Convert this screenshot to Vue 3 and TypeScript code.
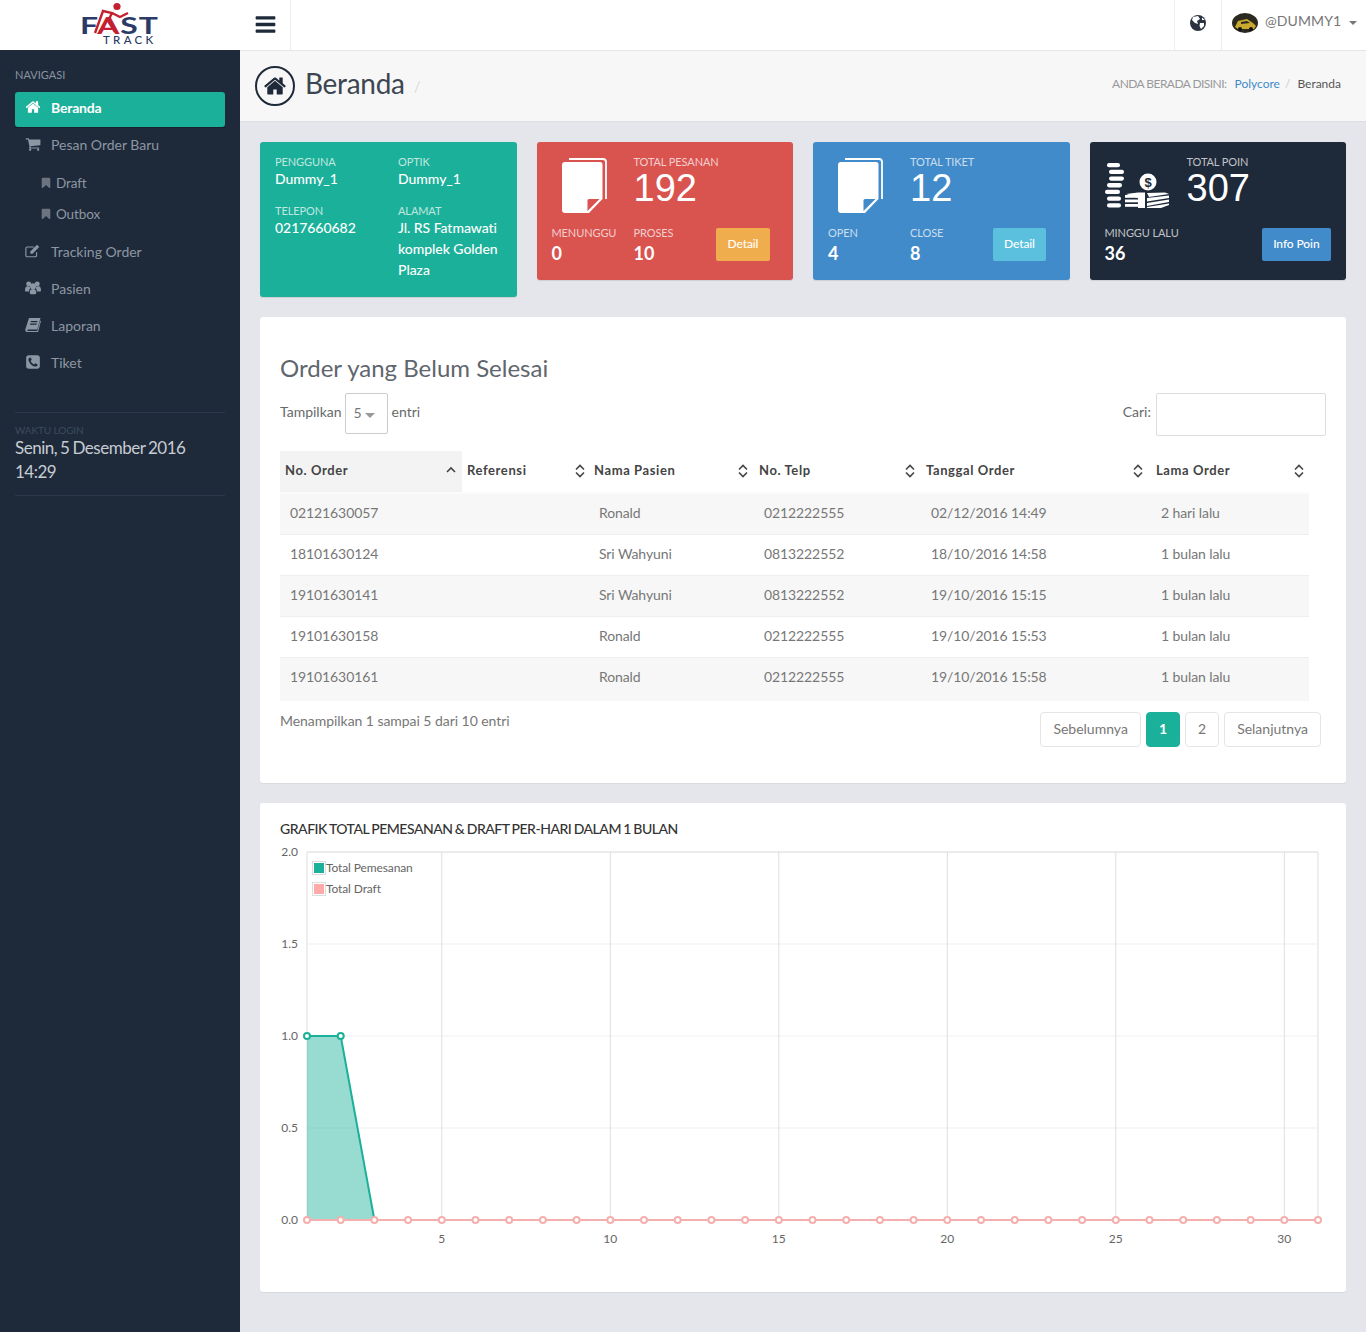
<template>
  <div class="app">
    <header class="topbar">
      <div class="brand">
        <div class="logo">
          <span class="logo-fast">F<b>A</b>ST</span>
          <span class="logo-track">TRACK</span>
          <svg class="logo-runner" viewBox="0 0 80 46" aria-hidden="true">
            <circle cx="37" cy="6.500" r="3.600" fill="#c4202f" />
            <path d="M15 33 L23 11 L32 13 L28 21 L35 32 M32 13 L40 17 L48 13" fill="none" stroke="#c4202f" stroke-width="2.400" />
          </svg>
        </div>
      </div>
      <button class="toggle">
        <svg viewBox="0 0 1792 1792" class="toggle-icon"><path :d="icons.bars" /></svg>
      </button>
      <div class="top-right">
        <div class="globe-cell">
          <svg viewBox="0 0 20 20" class="globe">
            <circle cx="10" cy="10" r="8" fill="#2b3340" />
            <path d="M5 4 L10 3 L12 6 L9 8 L10 11 L7 10 L4 7 Z M12 10 L16 10 L16 13 L13 16 L11.500 13 Z M14 4.500 L17 7 L14 7 Z" fill="#fff" />
          </svg>
        </div>
        <div class="user">
          <svg viewBox="0 0 26 20" class="avatar">
            <ellipse cx="13" cy="10" rx="13" ry="10" fill="#2c2a20" />
            <path d="M3 14 L6 8 L15 6 L21 10 L24 13 L22 16 L6 16 Z" fill="#c9a92e" />
            <path d="M9 9 L15 8 L18 10 L9 11 Z" fill="#2c2a20" />
            <circle cx="8" cy="16" r="2" fill="#111" />
            <circle cx="19" cy="16" r="2" fill="#111" />
          </svg>
          <span class="user-name">@DUMMY1</span>
          <i class="caret"></i>
        </div>
      </div>
    </header>

    <div class="body">
      <aside class="sidebar">
        <div class="nav-title">NAVIGASI</div>
        <nav class="nav">
          <template v-for="item in navItems" :key="item.label">
            <a class="nav-item" :class="{ active: item.active, sub: item.sub }">
              <svg class="nav-icon" :viewBox="item.box || '0 0 1792 1792'" v-html="item.icon"></svg>
              <span>{{ item.label }}</span>
            </a>
          </template>
        </nav>
        <div class="login-box">
          <div class="login-label">WAKTU LOGIN</div>
          <div class="login-time">Senin, 5 Desember 2016<br />14:29</div>
        </div>
      </aside>

      <main class="main">
        <div class="page-head">
          <div class="head-left">
            <span class="head-icon">
              <svg viewBox="0 0 1792 1792"><path :d="icons.home" /></svg>
            </span>
            <h1>Beranda</h1>
            <span class="head-slash">/</span>
          </div>
          <div class="crumbs">
            <span class="crumb-label">ANDA BERADA DISINI:</span>
            <a>Polycore</a>
            <span class="crumb-sep">/</span>
            <span class="crumb-now">Beranda</span>
          </div>
        </div>

        <div class="content">
          <section class="stats">
            <div class="stat stat-user">
              <div v-for="f in userFields" :key="f.label" class="user-field">
                <div class="stat-label">{{ f.label }}</div>
                <div class="user-value">{{ f.value }}</div>
              </div>
            </div>

            <div v-for="card in docCards" :key="card.title" class="stat" :class="card.cls">
              <div class="stat-top">
                <svg class="doc-icon" viewBox="0 0 45 56">
                  <path d="M7 2 H41 a3 3 0 0 1 3 3 V42" fill="none" stroke="#fff" stroke-width="1.800" />
                  <path d="M3 5 H38 a2.500 2.500 0 0 1 2.500 2.500 V42 L27 56 H3 a3 3 0 0 1 -3 -3 V8 a3 3 0 0 1 3 -3 Z" fill="#fff" />
                  <path d="M25.500 54 V43.500 a1.500 1.500 0 0 1 1.500 -1.500 H37.500 Z" :fill="card.fold" />
                </svg>
                <div>
                  <div class="stat-label">{{ card.title }}</div>
                  <div class="stat-big">{{ card.total }}</div>
                </div>
              </div>
              <div class="stat-bottom">
                <div v-for="s in card.subs" :key="s.label">
                  <div class="stat-label">{{ s.label }}</div>
                  <div class="stat-num">{{ s.value }}</div>
                </div>
                <button class="stat-btn" :class="card.btn">Detail</button>
              </div>
            </div>

            <div class="stat stat-poin">
              <div class="stat-top">
                <svg class="money-icon" viewBox="0 0 64 50">
                  <g fill="#fff">
                    <rect x="2" y="1" width="13" height="4.300" rx="2.100" />
                    <rect x="4" y="7.700" width="15" height="4.300" rx="2.100" />
                    <rect x="4" y="14.400" width="15" height="4.300" rx="2.100" />
                    <rect x="2" y="21.100" width="15" height="4.300" rx="2.100" />
                    <rect x="0" y="27.800" width="15" height="4.300" rx="2.100" />
                    <rect x="2" y="34.500" width="14" height="4.300" rx="2.100" />
                    <rect x="2" y="41.200" width="14" height="4.300" rx="2.100" />
                    <circle cx="43" cy="20" r="8.500" />
                    <rect x="20" y="33" width="13" height="2.800" />
                    <rect x="20" y="37.500" width="13" height="2.800" />
                    <rect x="20" y="42" width="13" height="2.800" />
                    <path d="M21 32 L33 30.500 H38 L40 30.500 V46 H33 V36 Z" />
                    <path d="M42 31 L60 30.500 L64 32 L44 35 Z M42 36 L64 33.500 V36 L42 39.500 Z M42 41 L64 37.500 V40 L42 44 Z M42 45 L64 41.500 V43 L56 46 H42 Z" />
                  </g>
                  <text x="43" y="24.500" text-anchor="middle" class="money-sign">$</text>
                </svg>
                <div>
                  <div class="stat-label">TOTAL POIN</div>
                  <div class="stat-big">307</div>
                </div>
              </div>
              <div class="stat-bottom poin-bottom">
                <div>
                  <div class="stat-label">MINGGU LALU</div>
                  <div class="stat-num">36</div>
                </div>
                <button class="stat-btn btn-blue">Info Poin</button>
              </div>
            </div>
          </section>

          <section class="panel order-panel">
            <h2>Order yang Belum Selesai</h2>
            <div class="table-tools">
              <div class="len">
                <span>Tampilkan</span>
                <span class="select-box">5 <i class="select-caret"></i></span>
                <span class="len-after">entri</span>
              </div>
              <label class="search">Cari: <input type="text" /></label>
            </div>
            <table class="orders">
              <colgroup>
                <col v-for="c in columns" :key="c.label" :style="{ width: c.width + 'px' }" />
              </colgroup>
              <thead>
                <tr>
                  <th v-for="(c, i) in columns" :key="c.label" :class="{ sorted: i === 0 }">
                    <div class="th-in">
                      <span>{{ c.label }}</span>
                      <svg viewBox="0 0 12 16" class="sort" :style="{ marginRight: c.sortPad + 'px' }">
                        <path v-if="i === 0" d="M2 9 L6 5 L10 9" />
                        <template v-else>
                          <path d="M2 6.500 L6 2.500 L10 6.500" />
                          <path d="M2 9.500 L6 13.500 L10 9.500" />
                        </template>
                      </svg>
                    </div>
                  </th>
                </tr>
              </thead>
              <tbody>
                <tr v-for="o in orders" :key="o.no">
                  <td>{{ o.no }}</td>
                  <td></td>
                  <td>{{ o.name }}</td>
                  <td>{{ o.phone }}</td>
                  <td>{{ o.date }}</td>
                  <td>{{ o.age }}</td>
                </tr>
              </tbody>
            </table>
            <div class="table-foot">
              <div class="info">Menampilkan 1 sampai 5 dari 10 entri</div>
              <div class="pager">
                <a>Sebelumnya</a>
                <a class="current">1</a>
                <a>2</a>
                <a>Selanjutnya</a>
              </div>
            </div>
          </section>

          <section class="panel chart-panel">
            <h3>GRAFIK TOTAL PEMESANAN &amp; DRAFT PER-HARI DALAM 1 BULAN</h3>
            <svg class="chart" viewBox="0 0 1046 420" width="1046" height="420">
              <line v-for="(y, i) in yTicks" :key="'h' + i" :x1="plotL" :x2="plotR" :y1="y.y" :y2="y.y" class="grid-h" />
              <line v-for="x in xTicks" :key="'v' + x.label" :x1="x.x" :x2="x.x" :y1="plotT" :y2="plotB" class="grid-v" />
              <line :x1="plotL" :x2="plotL" :y1="plotT" :y2="plotB" class="grid-v" />
              <line :x1="plotR" :x2="plotR" :y1="plotT" :y2="plotB" class="grid-v" />
              <line :x1="plotL" :x2="plotR" :y1="plotT" :y2="plotT" class="grid-v" />
              <text v-for="y in yTicks" :key="y.label" :x="18" :y="y.y + 4" text-anchor="end" class="tick">{{ y.label }}</text>
              <text v-for="x in xTicks" :key="x.label" :x="x.x" :y="plotB + 23" text-anchor="middle" class="tick">{{ x.label }}</text>

              <polygon :points="areaPoints" fill="rgba(27,176,153,0.45)" />
              <polyline :points="linePoints(pemesanan)" fill="none" stroke="#1bb099" stroke-width="2" />
              <circle v-for="(v, i) in pemesanan.slice(0, 2)" :key="'t' + i" :cx="px(i)" :cy="py(v)" r="3" class="pt-teal" />
              <polyline :points="linePoints(draft)" fill="none" stroke="#f4b0ae" stroke-width="2" />
              <circle v-for="(v, i) in draft" :key="'d' + i" :cx="px(i)" :cy="py(v)" r="3" class="pt-pink" />

              <rect x="32.500" y="19.500" width="13" height="13" fill="#fff" stroke="#ddd" />
              <rect x="34" y="21" width="10" height="10" fill="#1bb099" />
              <text x="46" y="30" class="legend">Total Pemesanan</text>
              <rect x="32.500" y="40.500" width="13" height="13" fill="#fff" stroke="#ddd" />
              <rect x="34" y="42" width="10" height="10" fill="#ffa9a9" />
              <text x="46" y="51" class="legend">Total Draft</text>
            </svg>
          </section>
        </div>
      </main>
    </div>
  </div>
</template>

<script setup lang="ts">
const icons = {
  bars: 'M1664 1344v128q0 26-19 45t-45 19h-1408q-26 0-45-19t-19-45v-128q0-26 19-45t45-19h1408q26 0 45 19t19 45zm0-512v128q0 26-19 45t-45 19h-1408q-26 0-45-19t-19-45v-128q0-26 19-45t45-19h1408q26 0 45 19t19 45zm0-512v128q0 26-19 45t-45 19h-1408q-26 0-45-19t-19-45v-128q0-26 19-45t45-19h1408q26 0 45 19t19 45z',
  home: 'M1472 992v480q0 26-19 45t-45 19h-384v-384h-256v384h-384q-26 0-45-19t-19-45v-480q0-1 .5-3t.5-3l575-474 575 474q1 2 1 6zm223-69l-62 74q-8 9-21 11h-3q-13 0-21-7l-692-577-692 577q-12 8-24 7-13-2-21-11l-62-74q-8-10-7-23.500t11-21.500l719-599q32-26 76-26t76 26l244 204v-195q0-14 9-23t23-9h192q14 0 23 9t9 23v408l219 182q10 8 11 21.500t-7 23.500z',
  cart: 'M704 1536q0 52-38 90t-90 38-90-38-38-90 38-90 90-38 90 38 38 90zm896 0q0 52-38 90t-90 38-90-38-38-90 38-90 90-38 90 38 38 90zm128-1088v512q0 24-16.500 42.500t-40.500 21.500l-1044 122q13 60 13 70 0 16-24 64h920q26 0 45 19t19 45-19 45-45 19h-1024q-26 0-45-19t-19-45q0-11 8-31.500t16-36 21.500-40 15.500-29.500l-177-823h-204q-26 0-45-19t-19-45 19-45 45-19h256q16 0 28.500 6.500t19.500 15.500 13 24.500 8 26 5.500 29.500 4.500 26h1201q26 0 45 19t19 45z',
  bookmark: 'M1420 128q23 0 44 9 33 13 52.500 41t19.500 62v1289q0 34-19.500 62t-52.500 41q-19 8-44 8-48 0-83-32l-441-424-441 424q-36 33-83 33-23 0-44-9-33-13-52.500-41t-19.500-62v-1289q0-34 19.500-62t52.500-41q21-9 44-9h1048z',
  phone: 'M1408 1193q0-11-2-16t-18-16.500-40.500-25-47.500-26.500-45.500-25-28.500-15q-5-3-19-13t-25-15-21-5q-15 0-36.500 20.500t-39.500 45-38.500 45-33.500 20.500q-7 0-16.500-3.500t-15.500-6.500-17-9.500-14-8.500q-99-55-170-126.500t-127-170.500q-2-3-8.500-14t-9.500-17-6.500-15.500-3.500-16.500q0-13 20.500-33.500t45-38.500 45-39.500 20.500-36.500q0-10-5-21t-15-25-13-19q-3-6-15-28.500t-25-45.500-26.500-47.500-25-40.500-16.500-18-16-2q-48 0-101 22-46 21-80 94.500t-34 130.500q0 16 2.500 34t5 30.500 9 33 10 29.500 12.500 33 11 30q60 164 216.500 320.500t320.500 216.500q6 2 30 11t33 12.500 29.500 10 33 9 30.500 5 34 2.500q57 0 130.500-34t94.500-80q22-53 22-101zm256-777v960q0 119-84.500 203.500t-203.500 84.500h-960q-119 0-203.500-84.500t-84.500-203.500v-960q0-119 84.500-203.500t203.500-84.500h960q119 0 203.500 84.500t84.500 203.500z',
}

const p = (d: string) => `<path d="${d}" />`

const navItems = [
  { label: 'Beranda', active: true, icon: p(icons.home) },
  { label: 'Pesan Order Baru', icon: p(icons.cart) },
  { label: 'Draft', sub: true, icon: p(icons.bookmark) },
  { label: 'Outbox', sub: true, icon: p(icons.bookmark) },
  {
    label: 'Tracking Order',
    box: '0 0 18 16',
    icon: '<path d="M13 9.500V13a1.500 1.500 0 0 1-1.500 1.500H2.500A1.500 1.500 0 0 1 1 13V5a1.500 1.500 0 0 1 1.500-1.500H10" fill="none" stroke="currentColor" stroke-width="1.300"/><path d="M6 8.500L13.500 1l2.500 2.500L8.500 11H6z"/>',
  },
  {
    label: 'Pasien',
    box: '0 0 18 15',
    icon: '<circle cx="4.200" cy="3" r="2.800"/><circle cx="13.800" cy="3" r="2.800"/><circle cx="9" cy="5.500" r="3.400"/><path d="M0 10c0-3 1-4.500 3-4.500l2.300.5.700 2c-1 .6-1.500 2-1.500 3.500H1c-.6 0-1-.5-1-1.500zM18 10c0-3-1-4.500-3-4.500l-2.300.5-.7 2c1 .6 1.500 2 1.500 3.500H17c.6 0 1-.5 1-1.500zM5.300 12.500c0-2.500 1-4 3.700-4s3.700 1.500 3.700 4c0 1.200-.7 2-1.700 2H7c-1 0-1.700-.8-1.700-2z"/>',
  },
  {
    label: 'Laporan',
    box: '0 0 16 16',
    icon: '<path fill-rule="evenodd" d="M4 1h11.500l-3.200 11.500H3c-.9 0-1 1.500 0 1.500h9.300l3-10.500.7.500-3 11H2.200C.5 15 0 13.500.4 12zM6 4l-.3 1.200h6.500L12.500 4zM5.300 6.500L5 7.700h6.500l.3-1.200z"/>',
  },
  { label: 'Tiket', icon: p(icons.phone) },
]

const userFields = [
  { label: 'PENGGUNA', value: 'Dummy_1' },
  { label: 'OPTIK', value: 'Dummy_1' },
  { label: 'TELEPON', value: '0217660682' },
  { label: 'ALAMAT', value: 'Jl. RS Fatmawati komplek Golden Plaza' },
]

const docCards = [
  {
    title: 'TOTAL PESANAN',
    total: 192,
    cls: 'stat-red',
    btn: 'btn-orange',
    fold: '#d9534f',
    subs: [
      { label: 'MENUNGGU', value: 0 },
      { label: 'PROSES', value: 10 },
    ],
  },
  {
    title: 'TOTAL TIKET',
    total: 12,
    cls: 'stat-blue',
    btn: 'btn-cyan',
    fold: '#428bca',
    subs: [
      { label: 'OPEN', value: 4 },
      { label: 'CLOSE', value: 8 },
    ],
  },
]

const columns = [
  { label: 'No. Order', width: 182, sortPad: 1 },
  { label: 'Referensi', width: 127, sortPad: -1 },
  { label: 'Nama Pasien', width: 165, sortPad: 1 },
  { label: 'No. Telp', width: 167, sortPad: 1 },
  { label: 'Tanggal Order', width: 230, sortPad: 3 },
  { label: 'Lama Order', width: 158, sortPad: 0 },
]

const orders = [
  { no: '02121630057', name: 'Ronald', phone: '0212222555', date: '02/12/2016 14:49', age: '2 hari lalu' },
  { no: '18101630124', name: 'Sri Wahyuni', phone: '0813222552', date: '18/10/2016 14:58', age: '1 bulan lalu' },
  { no: '19101630141', name: 'Sri Wahyuni', phone: '0813222552', date: '19/10/2016 15:15', age: '1 bulan lalu' },
  { no: '19101630158', name: 'Ronald', phone: '0212222555', date: '19/10/2016 15:53', age: '1 bulan lalu' },
  { no: '19101630161', name: 'Ronald', phone: '0212222555', date: '19/10/2016 15:58', age: '1 bulan lalu' },
]

// chart geometry, in svg units (svg starts at x=280)
const plotL = 27
const plotR = 1038
const plotT = 10
const plotB = 378
const px = (i: number) => plotL + (i * (plotR - plotL)) / 30
const py = (v: number) => plotB - (v / 2) * (plotB - plotT)

const pemesanan = Array.from({ length: 31 }, (_, i) => (i < 2 ? 1 : 0))
const draft = Array.from({ length: 31 }, () => 0)

const linePoints = (data: number[]) => data.map((v, i) => `${px(i)},${py(v)}`).join(' ')
const areaPoints = `${px(0)},${py(0)} ${px(0)},${py(1)} ${px(1)},${py(1)} ${px(2)},${py(0)}`

const yTicks = [2, 1.5, 1, 0.5, 0].map(v => ({ label: v.toFixed(1), y: py(v) }))
const xTicks = [5, 10, 15, 20, 25, 30].map(d => ({ label: d, x: px(d - 1) }))
</script>

<style>
html,
body {
  margin: 0;
  background: #e4e6eb;
}
</style>

<style scoped>
* {
  box-sizing: border-box;
}

.app {
  width: 1366px;
  min-height: 1332px;
  font-family: Lato, 'Liberation Sans', sans-serif;
  font-size: 14px;
  color: #676a6c;
  background: #e4e6eb;
}

.topbar {
  display: flex;
  height: 51px;
  background: #fff;
  border-bottom: 1px solid #e4e6eb;
}

.brand {
  width: 240px;
  padding-left: 80px;
}

.logo {
  position: relative;
  width: 80px;
  height: 46px;
}

.logo-fast {
  position: absolute;
  left: 0;
  top: 18px;
  font-size: 22px;
  line-height: 16px;
  font-weight: 700;
  letter-spacing: 0.7px;
  color: #2b3a67;
  transform: scaleX(1.45);
  transform-origin: left center;
}

.logo-fast b {
  color: #c4202f;
  font-weight: 700;
}

.logo-track {
  position: absolute;
  left: 23px;
  top: 35px;
  font-size: 11.500px;
  line-height: 10px;
  font-weight: 500;
  letter-spacing: 3.300px;
  color: #2b3a67;
}

.logo-runner {
  position: absolute;
  left: 0;
  top: 0;
  width: 80px;
  height: 46px;
}

.toggle {
  width: 51px;
  height: 50px;
  padding: 0 0 2px;
  background: #fff;
  border: 0;
  border-right: 1px solid #eceef1;
  display: flex;
  align-items: center;
  justify-content: center;
}

.toggle-icon {
  width: 23px;
  height: 23px;
  fill: #1e2a3a;
}

.top-right {
  margin-left: auto;
  display: flex;
  height: 50px;
}

.globe-cell {
  width: 48px;
  padding-bottom: 5px;
  display: flex;
  align-items: center;
  justify-content: center;
  border-left: 1px solid #eceef1;
  border-right: 1px solid #eceef1;
}

.globe {
  width: 20px;
  height: 20px;
}

.user {
  width: 144px;
  padding: 0 0 5px 10px;
  display: flex;
  align-items: center;
  font-size: 14px;
  letter-spacing: 0.1px;
  color: #777;
}

.user-name {
  margin-top: -4px;
}

.avatar {
  width: 26px;
  height: 20px;
  margin-right: 7px;
}

.caret {
  margin: 0 0 0 8px;
  border-top: 4px solid #777;
  border-left: 4px solid transparent;
  border-right: 4px solid transparent;
}

.body {
  display: flex;
}

.sidebar {
  width: 240px;
  min-height: 1282px;
  margin-top: -1px;
  padding: 0 15px;
  background: #1e2a3a;
  flex: none;
}

.nav-title {
  padding-top: 18px;
  font-size: 11px;
  line-height: 14px;
  color: #8a94a3;
}

.nav {
  margin-top: 10px;
}

.nav-item {
  display: flex;
  align-items: center;
  height: 35px;
  margin-bottom: 2px;
  padding: 0 0 5px 10px;
  border-radius: 3px;
  color: #8d96a3;
}

.nav-item.active {
  background: #1bb099;
  color: #fff;
  font-weight: 700;
  letter-spacing: -0.2px;
  box-shadow: 0 1px 1px rgba(0, 0, 0, 0.2);
}

.nav-item.sub {
  height: 31px;
  margin-bottom: 0;
  padding: 0 0 3px 25px;
  font-size: 13.500px;
  letter-spacing: -0.1px;
}

.nav-item.sub:nth-child(3) {
  margin-top: 5px;
}

.nav-item.sub:nth-child(4) {
  margin-bottom: 5px;
}

.nav-icon {
  width: 16px;
  height: 16px;
  margin-right: 10px;
  fill: currentColor;
  flex: none;
}

.sub .nav-icon {
  width: 12px;
  height: 12px;
  margin-right: 4px;
  fill: #6c7480;
}

.login-box {
  margin-top: 30px;
  padding: 11px 0 10px;
  border-top: 1px solid #2a3748;
  border-bottom: 1px solid #2a3748;
}

.login-label {
  font-size: 10px;
  line-height: 12px;
  letter-spacing: -0.1px;
  color: #3d4a5c;
}

.login-time {
  margin-top: 0;
  padding-bottom: 1px;
  font-size: 17px;
  line-height: 24px;
  letter-spacing: -0.5px;
  word-spacing: -0.8px;
  color: #c7ccd3;
}

.main {
  flex: 1;
  min-width: 0;
}

.page-head {
  height: 71px;
  padding: 0 25px 0 15px;
  display: flex;
  align-items: center;
  justify-content: space-between;
  background: #f7f7f8;
  border-bottom: 1px solid #dcdee3;
}

.head-left {
  display: flex;
  align-items: center;
}

.head-icon {
  width: 40px;
  height: 40px;
  display: flex;
  align-items: center;
  justify-content: center;
  border: 2px solid #1e2a3a;
  border-radius: 50%;
}

.head-icon svg {
  width: 24px;
  height: 24px;
  fill: #1e2a3a;
}

h1 {
  margin: 0 0 6px 10px;
  font-size: 28px;
  line-height: 34px;
  font-weight: 400;
  letter-spacing: -0.3px;
  color: #3d4650;
}

.head-slash {
  margin: 0 0 1px 9px;
  color: #ddd;
  font-size: 15px;
}

.crumbs {
  padding-bottom: 6px;
  display: flex;
  align-items: center;
  font-size: 12px;
}

.crumb-label {
  color: #999;
  letter-spacing: -0.55px;
}

.crumbs a {
  margin-left: 8px;
  color: #428bca;
}

.crumb-sep {
  margin: 0 7px 0 5px;
  color: #ccc;
}

.crumb-now {
  color: #555;
}

.content {
  padding: 20px;
  height: 1210px;
}

.stats {
  display: grid;
  grid-template-columns: repeat(4, 1fr);
  gap: 20px;
  align-items: start;
}

.stat {
  height: 138px;
  padding: 14px 15px;
  border-radius: 3px;
  color: #fff;
  box-shadow: 0 1px 1px rgba(0, 0, 0, 0.1);
}

.stat-user {
  height: 155px;
  display: grid;
  grid-template-columns: 123px 1fr;
  grid-template-rows: 49px auto;
  background: #1bb099;
}

.stat-red {
  background: #d9534f;
}

.stat-blue {
  background: #428bca;
}

.stat-poin {
  background: #1e2a3a;
}

.stat-label {
  font-size: 11px;
  line-height: 12px;
  letter-spacing: -0.1px;
  color: rgba(255, 255, 255, 0.72);
}

.user-value {
  font-size: 14px;
  line-height: 21px;
  letter-spacing: -0.05px;
  font-weight: 500;
  color: #fff;
}

.stat-top {
  display: grid;
  grid-template-columns: 82px 1fr;
  height: 71px;
}

.doc-icon {
  width: 45px;
  height: 56px;
  margin: 1px 0 0 10px;
}

.money-icon {
  width: 64px;
  height: 50px;
  margin-top: 6px;
}

.money-sign {
  font-family: 'Liberation Sans', sans-serif;
  font-size: 13px;
  font-weight: 700;
  fill: #1e2a3a;
}

.stat-big {
  margin-top: -2px;
  font-family: 'Liberation Sans', sans-serif;
  font-size: 38px;
  line-height: 44px;
  color: #fff;
}

.stat-bottom {
  display: grid;
  grid-template-columns: 82px 82.500px 1fr;
  align-items: start;
}

.poin-bottom {
  grid-template-columns: 1fr auto;
}

.stat-num {
  margin-top: 2px;
  font-size: 18px;
  line-height: 24px;
  font-weight: 700;
}

.stat-btn {
  height: 33px;
  margin-top: 1px;
  padding: 0 11.500px 2px;
  border: 0;
  border-radius: 2px;
  color: #fff;
  font-family: inherit;
  font-size: 12px;
  font-weight: 500;
  letter-spacing: -0.1px;
  justify-self: start;
}

.btn-orange {
  background: #f0ad4e;
}

.btn-cyan {
  background: #5bc0de;
}

.btn-blue {
  background: #428bca;
}

.panel {
  background: #fff;
  border-radius: 3px;
  box-shadow: 0 1px 1px rgba(0, 0, 0, 0.06);
}

.order-panel {
  height: 466px;
  margin-top: 20px;
  padding: 37px 20px 0;
}

h2 {
  margin: 0;
  font-size: 24px;
  line-height: 28px;
  font-weight: 400;
  color: #5f666d;
}

.table-tools {
  height: 58px;
  margin-top: 11px;
  display: flex;
  justify-content: space-between;
  align-items: flex-start;
}

.len {
  display: flex;
  align-items: flex-start;
  line-height: 38px;
}

.len-after {
  margin-left: 1px;
}

.select-box {
  width: 43px;
  height: 41px;
  margin: 0 3px;
  padding-left: 8px;
  border: 1px solid #ccc;
  border-radius: 2px;
  color: #777;
}

.select-caret {
  display: inline-block;
  margin-left: 0;
  border-top: 5px solid #999;
  border-left: 5.500px solid transparent;
  border-right: 5.500px solid transparent;
}

.search {
  display: flex;
  align-items: flex-start;
  line-height: 38px;
}

.search input {
  width: 170px;
  height: 43px;
  margin-left: 5px;
  border: 1px solid #ddd;
  border-radius: 2px;
}

.orders {
  width: 1029px;
  table-layout: fixed;
  border-collapse: collapse;
}

th {
  height: 42px;
  padding: 0 4px 3px 5px;
  font-size: 13px;
  letter-spacing: 0.6px;
  color: #444;
  text-align: left;
  border-bottom: 2px solid #fbfbfb;
}

th.sorted {
  background: #f3f3f3;
}

.th-in {
  display: flex;
  justify-content: space-between;
  align-items: center;
}

.sort {
  width: 12px;
  height: 16px;
  margin-top: 2px;
  fill: none;
  stroke: #444;
  stroke-width: 1.600;
}

td {
  height: 41px;
  padding: 0 0 2px 10px;
  border-bottom: 1px solid #eee;
  color: #777;
  letter-spacing: -0.1px;
}

tbody tr:nth-child(odd) td {
  background: #f7f7f7;
}

tbody tr:last-child td {
  height: 44px;
  padding-bottom: 5px;
  border-bottom: 0;
}

.table-foot {
  margin-top: 11px;
  padding-right: 5px;
  display: flex;
  justify-content: space-between;
}

.info {
  line-height: 18px;
  letter-spacing: -0.05px;
  color: #777;
}

.pager {
  display: flex;
  gap: 5px;
}

.pager a {
  height: 35px;
  padding: 0 12px 3px;
  display: flex;
  align-items: center;
  border: 1px solid #e5e5e5;
  border-radius: 4px;
  color: #777;
}

.pager a.current {
  background: #1bb099;
  border-color: #1bb099;
  color: #fff;
  font-weight: 700;
}

.chart-panel {
  height: 489px;
  margin-top: 20px;
  padding: 17px 20px 0;
}

h3 {
  margin: 0;
  height: 22px;
  font-size: 14px;
  line-height: 18px;
  font-weight: 500;
  letter-spacing: -0.48px;
  word-spacing: -0.7px;
  color: #333;
}

.chart {
  display: block;
}

.grid-h {
  stroke: #efefef;
  stroke-width: 1;
}

.grid-v {
  stroke: #dedede;
  stroke-width: 1;
}

.tick,
.legend {
  font-family: Lato, 'Liberation Sans', sans-serif;
  font-size: 12px;
  fill: #666;
}

.legend {
  letter-spacing: -0.12px;
}

.pt-teal {
  fill: #fff;
  stroke: #1bb099;
  stroke-width: 2;
}

.pt-pink {
  fill: #fff;
  stroke: #f4b0ae;
  stroke-width: 2;
}
</style>
